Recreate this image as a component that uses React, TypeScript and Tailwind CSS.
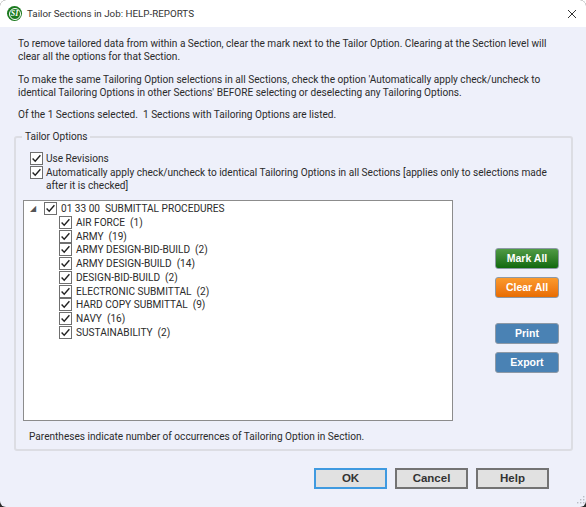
import type { ReactNode } from "react";

const options = [
  "AIR FORCE  (1)",
  "ARMY  (19)",
  "ARMY DESIGN-BID-BUILD  (2)",
  "ARMY DESIGN-BUILD  (14)",
  "DESIGN-BID-BUILD  (2)",
  "ELECTRONIC SUBMITTAL  (2)",
  "HARD COPY SUBMITTAL  (9)",
  "NAVY  (16)",
  "SUSTAINABILITY  (2)",
];

function Check() {
  return (
    <span className="flex h-[13px] w-[13px] shrink-0 items-center justify-center border border-[#6f6f6f] bg-white">
      <svg width="11" height="11" viewBox="0 0 11 11" fill="none">
        <path d="M1.6 5.6 L4.2 8.3 L9.4 2.2" stroke="#222" strokeWidth="1.4" />
      </svg>
    </span>
  );
}

function ColorButton({ className, children }: { className: string; children: ReactNode }) {
  return (
    <button
      className={`h-[21px] w-[64px] rounded-[3px] border border-[#8d99a6] font-['Liberation_Sans',sans-serif] text-[10.5px] font-bold text-white ${className}`}
    >
      {children}
    </button>
  );
}

function FooterButton({ blue, children }: { blue?: boolean; children: ReactNode }) {
  return (
    <button
      className={`h-[21px] w-[73px] border-2 bg-[#e1e1e1] font-['Liberation_Sans',sans-serif] text-[11.5px] font-bold text-[#333] ${
        blue ? "border-[#3f9ae0]" : "border-[#737373]"
      }`}
    >
      {children}
    </button>
  );
}

export default function App() {
  return (
    <div className="relative flex h-[507px] w-[586px] flex-col overflow-hidden rounded-t-[6px] bg-[#2a2a2a] font-['Roboto',sans-serif] text-[10.1px] leading-[13px] text-[#2b2b2b]">
      <div className="flex h-[27px] shrink-0 items-center justify-between bg-white pl-[7px] pr-[9px]">
        <div className="flex items-center gap-[5px]">
          <span className="flex h-[15px] w-[15px] items-center justify-center rounded-full bg-[#1c7a1f]">
            <span className="flex h-[12px] w-[12px] items-center justify-center rounded-full border border-white font-['Liberation_Serif',serif] text-[8px] font-bold italic leading-none text-white">
              SI
            </span>
          </span>
          <span className="text-[9.8px] text-[#333]">Tailor Sections in Job: HELP-REPORTS</span>
        </div>
        <svg width="10" height="10" viewBox="0 0 10 10" stroke="#333" strokeWidth="1">
          <path d="M1 1 L9 9 M9 1 L1 9" />
        </svg>
      </div>

      <div className="flex min-h-0 flex-1 flex-col rounded-b-[6px] bg-[#eef0fa] px-[14px] pt-[9.5px]">
        <div className="whitespace-nowrap pl-[4px] pr-[10px]">
          <p>
            To remove tailored data from within a Section, clear the mark next to the Tailor Option. Clearing at the
            Section level will
            <br />
            clear all the options for that Section.
          </p>
          <p className="mt-[10px]">
            To make the same Tailoring Option selections in all Sections, check the option 'Automatically apply
            check/uncheck to
            <br />
            identical Tailoring Options in other Sections' BEFORE selecting or deselecting any Tailoring Options.
          </p>
          <p className="mt-[9.5px] whitespace-pre">
            Of the 1 Sections selected.  1 Sections with Tailoring Options are listed.
          </p>
        </div>

        <fieldset className="mt-[9px] h-[321px] rounded-[3px] border-2 border-[#dcdde3] pl-[7px] pr-[12px]">
          <legend className="ml-[-1px] px-[3px] leading-[14px]">Tailor Options</legend>
          <div className="mt-[8px] ml-[7px] flex flex-col whitespace-nowrap leading-[13.5px]">
            <label className="flex items-center gap-[3px]">
              <Check />
              <span>Use Revisions</span>
            </label>
            <label className="flex items-start gap-[3px]">
              <Check />
              <span>
                Automatically apply check/uncheck to identical Tailoring Options in all Sections [applies only to
                selections made
                <br />
                after it is checked]
              </span>
            </label>
          </div>

          <div className="mt-[7px] flex">
            <div className="h-[221px] w-[430px] shrink-0 border border-[#8c8c8c] bg-white pt-[1px]">
              <div className="flex h-[14px] items-center">
                <span className="ml-[6px] w-[14px] text-[8px] leading-none text-[#555]">◢</span>
                <Check />
                <span className="ml-[4px] whitespace-pre">01 33 00  SUBMITTAL PROCEDURES</span>
              </div>
              {options.map((option) => (
                <div key={option} className="flex h-[13.75px] items-center pl-[35px]">
                  <Check />
                  <span className="ml-[4px] whitespace-pre">{option}</span>
                </div>
              ))}
            </div>
            <div className="ml-[42px] flex flex-col pt-[48px]">
              <ColorButton className="bg-gradient-to-b from-[#4f9a45] to-[#0e6a0c]">Mark All</ColorButton>
              <ColorButton className="mt-[8px] bg-gradient-to-b from-[#fb9a2c] to-[#e86c00]">Clear All</ColorButton>
              <ColorButton className="mt-[25px] bg-[#4a82b4]">Print</ColorButton>
              <ColorButton className="mt-[8px] bg-[#4a82b4]">Export</ColorButton>
            </div>
          </div>

          <p className="mt-[9.5px] pl-[6px]">Parentheses indicate number of occurrences of Tailoring Option in Section.</p>
        </fieldset>

        <div className="mt-[17px] flex justify-end gap-[8px] pr-[23px]">
          <FooterButton blue>OK</FooterButton>
          <FooterButton>Cancel</FooterButton>
          <FooterButton>Help</FooterButton>
        </div>
      </div>

      <svg className="absolute bottom-[1px] right-[1px]" width="10" height="10" viewBox="0 0 10 10" fill="#b9bcc4">
        <rect x="8" y="0" width="1.4" height="1.4" />
        <rect x="5" y="3" width="1.4" height="1.4" />
        <rect x="8" y="3" width="1.4" height="1.4" />
        <rect x="2" y="6" width="1.4" height="1.4" />
        <rect x="5" y="6" width="1.4" height="1.4" />
        <rect x="8" y="6" width="1.4" height="1.4" />
      </svg>
    </div>
  );
}
